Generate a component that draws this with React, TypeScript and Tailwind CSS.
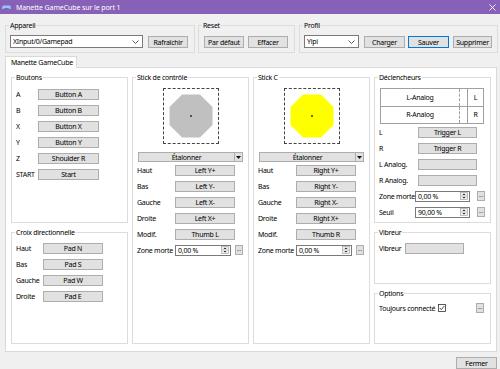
import type { ReactNode } from 'react';
import clsx from 'clsx';

// Petits composants façon Win32 (boutons, champs, groupes)

function Btn({ children, className, primary }: { children?: ReactNode; className?: string; primary?: boolean }) {
  return (
    <div
      className={clsx(
        'flex items-center justify-center border bg-[#e1e1e1]',
        primary ? 'border-[#0078d7]' : 'border-[#adadad]',
        className
      )}
    >
      {children}
    </div>
  );
}

function Chevron() {
  return (
    <svg width="7" height="4" viewBox="0 0 7 4" className="shrink-0">
      <polyline points="0.5,0.5 3.5,3.5 6.5,0.5" fill="none" stroke="#333" strokeWidth="0.8" />
    </svg>
  );
}

function Select({ value, className }: { value: string; className?: string }) {
  return (
    <div className={clsx('flex items-center border border-[#7a7a7a] bg-white pl-[2px] pr-[3px]', className)}>
      <span className="flex-1">{value}</span>
      <Chevron />
    </div>
  );
}

function Spin({ value, className }: { value: string; className?: string }) {
  return (
    <div className={clsx('flex items-center border border-[#7a7a7a] bg-white pl-[2px] pr-[1px] h-[11px]', className)}>
      <span className="flex-1">{value}</span>
      <svg width="8" height="8" viewBox="0 0 8 8" className="shrink-0">
        <rect x="0.5" y="0.5" width="7" height="7" fill="#f0f0f0" stroke="#9a9a9a" strokeWidth="0.6" />
        <line x1="0.5" y1="4" x2="7.5" y2="4" stroke="#9a9a9a" strokeWidth="0.5" />
        <polygon points="2.5,3 4,1.5 5.5,3" fill="#222" />
        <polygon points="2.5,5 4,6.5 5.5,5" fill="#222" />
      </svg>
    </div>
  );
}

function Dots({ className }: { className?: string }) {
  return (
    <Btn className={clsx('w-[8px] h-[10px] items-end pb-[2px] text-[5px] leading-none tracking-normal', className)}>...</Btn>
  );
}

function Group({ label, className, bg = 'bg-white', children }: { label: string; className?: string; bg?: string; children?: ReactNode }) {
  return (
    <div className={clsx('relative border border-[#dcdcdc]', className)}>
      <span className={clsx('absolute left-[3px] top-[-5px] px-[1px] leading-[9px]', bg)}>{label}</span>
      {children}
    </div>
  );
}

function Row({ label, labelW, children }: { label: string; labelW: string; children: ReactNode }) {
  return (
    <div className="flex items-center h-[16px] pl-[4px]">
      <span className={clsx('shrink-0', labelW)}>{label}</span>
      {children}
    </div>
  );
}

function Gate({ fill }: { fill: string }) {
  return (
    <div className="mx-auto mt-[10px] w-[56px] h-[56px] border border-dashed border-[#444]">
      <svg width="54" height="54" viewBox="0 0 54 54">
        <polygon
          points="48.5,35.9 35.9,48.5 18.1,48.5 5.5,35.9 5.5,18.1 18.1,5.5 35.9,5.5 48.5,18.1"
          fill={fill}
        />
        <circle cx="27" cy="27" r="1" fill="#333" />
      </svg>
    </div>
  );
}

function Calibrate() {
  return (
    <div className="mx-[5px] mt-[8px] h-[10px] flex border border-[#adadad] bg-[#e1e1e1]">
      <span className="flex-1 flex items-center justify-center">Étalonner</span>
      <span className="w-[8px] flex items-center justify-center border-l border-[#adadad]">
        <svg width="5" height="3" viewBox="0 0 5 3">
          <polygon points="0,0 5,0 2.5,3" fill="#111" />
        </svg>
      </span>
    </div>
  );
}

function Stick({ title, fill, side, axis }: { title: string; fill: string; side: string; axis: string }) {
  const lw = 'w-[38px]';
  return (
    <Group label={title} className="h-full">
      <Gate fill={fill} />
      <Calibrate />
      <Row label="Haut" labelW={lw}><Btn className="w-[60px] h-[11px]">{side} Y+</Btn></Row>
      <Row label="Bas" labelW={lw}><Btn className="w-[60px] h-[11px]">{side} Y-</Btn></Row>
      <Row label="Gauche" labelW={lw}><Btn className="w-[60px] h-[11px]">{side} X-</Btn></Row>
      <Row label="Droite" labelW={lw}><Btn className="w-[60px] h-[11px]">{side} X+</Btn></Row>
      <Row label="Modif." labelW={lw}><Btn className="w-[60px] h-[11px]">{axis}</Btn></Row>
      <Row label="Zone morte" labelW={lw}>
        <Spin value="0,00 %" className="w-[56px]" />
        <Dots className="ml-[4px]" />
      </Row>
    </Group>
  );
}

export default function App() {
  return (
    <div className="w-[500px] h-[369px] overflow-hidden bg-[#f0f0f0] flex flex-col font-['Noto_Sans',sans-serif] text-[7px] leading-none tracking-[-0.25px] whitespace-nowrap text-black">
      {/* barre de titre */}
      <div className="h-[14px] shrink-0 bg-[#8661b7] flex items-center text-white">
        <svg width="9" height="5" viewBox="0 0 9 5" className="ml-[2px]">
          <path d="M1.5 0.5 H7.5 Q9 0.5 8.8 3.5 Q8.5 5 7.3 3.8 L6.3 3 H2.7 L1.7 3.8 Q0.5 5 0.2 3.5 Q0 0.5 1.5 0.5 Z" fill="#8fc8f2" />
        </svg>
        <span className="ml-[5px] tracking-[-0.1px]">Manette GameCube sur le port 1</span>
        <svg width="7" height="7" viewBox="0 0 7 7" className="ml-auto mr-[4px]">
          <path d="M0.5 0.5 L6.5 6.5 M6.5 0.5 L0.5 6.5" stroke="#fff" strokeWidth="0.9" />
        </svg>
      </div>

      {/* Appareil / Reset / Profil */}
      <div className="flex mt-[11px] h-[28px] shrink-0">
        <Group label="Appareil" bg="bg-[#f0f0f0]" className="ml-[5px] w-[190px] flex items-end pl-[4px] pb-[4px]">
          <Select value="XInput/0/Gamepad" className="w-[133px] h-[13px]" />
          <Btn className="ml-[5px] w-[40px] h-[12px]">Rafraîchir</Btn>
        </Group>
        <Group label="Reset" bg="bg-[#f0f0f0]" className="ml-[3px] w-[97px] flex items-end pl-[5px] pb-[4px]">
          <Btn className="w-[40px] h-[12px]">Par défaut</Btn>
          <Btn className="ml-[4px] w-[40px] h-[12px]">Effacer</Btn>
        </Group>
        <Group label="Profil" bg="bg-[#f0f0f0]" className="ml-[4px] w-[199px] flex items-end pl-[4px] pb-[4px]">
          <Select value="Yipi" className="w-[55px] h-[13px]" />
          <Btn className="ml-[5px] w-[41px] h-[12px]">Charger</Btn>
          <Btn primary className="ml-[3px] w-[41px] h-[12px]">Sauver</Btn>
          <Btn className="ml-[4px] w-[39px] h-[12px]">Supprimer</Btn>
        </Group>
      </div>

      {/* onglet */}
      <div className="relative z-10 -mb-px mt-[3px] ml-[5px] w-[72px] h-[12px] shrink-0 bg-white border border-b-0 border-[#d9d9d9] flex items-center pl-[5px]">
        Manette GameCube
      </div>

      {/* panneau */}
      <div className="ml-[5px] w-[492px] h-[285px] shrink-0 bg-white border border-[#d9d9d9] pt-[9px] pb-[7px] px-[5px] grid grid-cols-4 gap-x-[4px]">
        <div className="flex flex-col gap-[9px] min-h-0">
          <Group label="Boutons" className="h-[146px] pt-[8px]">
            {[
              ['A', 'Button A'],
              ['B', 'Button B'],
              ['X', 'Button X'],
              ['Y', 'Button Y'],
              ['Z', 'Shoulder R'],
              ['START', 'Start'],
            ].map(([k, v]) => (
              <Row key={k} label={k} labelW="w-[22px]">
                <Btn className="w-[61px] h-[11px]">{v}</Btn>
              </Row>
            ))}
          </Group>
          <Group label="Croix directionnelle" className="flex-1 pt-[7px]">
            {[
              ['Haut', 'Pad N'],
              ['Bas', 'Pad S'],
              ['Gauche', 'Pad W'],
              ['Droite', 'Pad E'],
            ].map(([k, v]) => (
              <Row key={k} label={k} labelW="w-[27px]">
                <Btn className="w-[60px] h-[11px]">{v}</Btn>
              </Row>
            ))}
          </Group>
        </div>

        <Stick title="Stick de contrôle" fill="#c0c0c0" side="Left" axis="Thumb L" />
        <Stick title="Stick C" fill="#ffff00" side="Right" axis="Thumb R" />

        <div className="flex flex-col gap-[9px] min-h-0">
          <Group label="Déclencheurs" className="h-[146px]">
            <div className="mt-[10px] ml-[5px] w-[104px] h-[36px] border border-[#a0a0a0] flex flex-col">
              {[
                ['L-Analog', 'L'],
                ['R-Analog', 'R'],
              ].map(([a, b], i) => (
                <div key={a} className={clsx('flex flex-1', i === 0 && 'border-b border-[#a0a0a0]')}>
                  <span className="w-[78px] flex items-center justify-center">{a}</span>
                  <span className="w-[8px] border-l border-dashed border-[#a0a0a0]" />
                  <span className="flex-1 flex items-center justify-center border-l border-[#a0a0a0]">{b}</span>
                </div>
              ))}
            </div>
            <Row label="L" labelW="w-[39px]"><Btn className="w-[59px] h-[11px]">Trigger L</Btn></Row>
            <Row label="R" labelW="w-[39px]"><Btn className="w-[59px] h-[11px]">Trigger R</Btn></Row>
            <Row label="L Analog." labelW="w-[39px]"><Btn className="w-[59px] h-[11px]" /></Row>
            <Row label="R Analog." labelW="w-[39px]"><Btn className="w-[59px] h-[11px]" /></Row>
            <Row label="Zone morte" labelW="w-[36px]">
              <Spin value="0,00 %" className="w-[55px]" />
              <Dots className="ml-[7px]" />
            </Row>
            <Row label="Seuil" labelW="w-[36px]">
              <Spin value="90,00 %" className="w-[55px]" />
              <Dots className="ml-[7px]" />
            </Row>
          </Group>
          <Group label="Vibreur" className="h-[52px] pt-[7px]">
            <Row label="Vibreur" labelW="w-[26px]"><Btn className="w-[59px] h-[11px]" /></Row>
          </Group>
          <Group label="Options" className="flex-1 pt-[6px]">
            <div className="flex items-center h-[16px] pl-[4px] pr-[6px]">
              <span>Toujours connecté</span>
              <svg width="8" height="8" viewBox="0 0 8 8" className="ml-[3px]">
                <rect x="0.5" y="0.5" width="7" height="7" fill="#fff" stroke="#333" strokeWidth="0.8" />
                <polyline points="1.8,4 3.3,5.6 6.3,2" fill="none" stroke="#222" strokeWidth="0.8" />
              </svg>
              <Dots className="ml-auto" />
            </div>
          </Group>
        </div>
      </div>

      {/* bas */}
      <div className="flex justify-end mt-[5px] mr-[3px]">
        <Btn className="w-[41px] h-[12px]">Fermer</Btn>
      </div>
    </div>
  );
}
